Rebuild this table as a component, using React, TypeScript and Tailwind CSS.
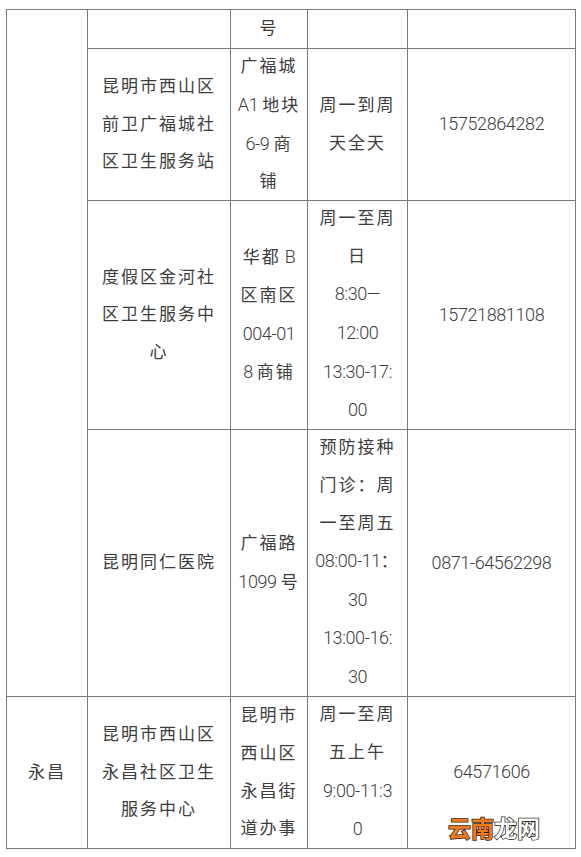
import React from "react";

type Cell = { lines: string[]; className?: string };

const CJK = /([\u3000-\u303f\u4e00-\u9fff\uff00-\uffef]+)/;

// split a line into CJK and latin runs so only the Chinese gets the wide spacing
const Line: React.FC<{ text: string }> = ({ text }) => {
  const parts = text.split(CJK).filter(Boolean);
  return (
    <div className="whitespace-nowrap">
      {parts.map((p, i) =>
        CJK.test(p) ? (
          <span key={i} className="tracking-[2px]">
            {p}
          </span>
        ) : (
          <span key={i} className="text-[18px] font-light tracking-[-0.4px]">
            {p}
          </span>
        )
      )}
    </div>
  );
};

const TableCell: React.FC<{ cell: Cell; children?: React.ReactNode }> = ({ cell, children }) => (
  <div
    className={
      "relative flex flex-col items-center justify-center border-r border-b border-[#7a7a7a] text-center " +
      (cell.className ?? "")
    }
  >
    {cell.lines.map((l, i) => (
      <Line key={i} text={l} />
    ))}
    {children}
  </div>
);

const rows: Cell[][] = [
  [{ lines: [] }, { lines: ["号"] }, { lines: [] }, { lines: [] }],
  [
    { lines: ["昆明市西山区", "前卫广福城社", "区卫生服务站"] },
    { lines: ["广福城", "A1 地块", "6-9 商", "铺"] },
    { lines: ["周一到周", "天全天"] },
    { lines: ["15752864282"] },
  ],
  [
    { lines: ["度假区金河社", "区卫生服务中", "心"] },
    { lines: ["华都 B", "区南区", "004-01", "8 商铺"] },
    { lines: ["周一至周", "日", "8:30—", "12:00", "13:30-17:", "00"] },
    { lines: ["15721881108"] },
  ],
  [
    { lines: ["昆明同仁医院"] },
    { lines: ["广福路", "1099 号"] },
    { lines: ["预防接种", "门诊：周", "一至周五", "08:00-11：", "30", "13:00-16:", "30"] },
    { lines: ["0871-64562298"] },
  ],
];

const lastRow: Cell[] = [
  { lines: ["永昌"] },
  { lines: ["昆明市西山区", "永昌社区卫生", "服务中心"] },
  { lines: ["昆明市", "西山区", "永昌街", "道办事"] },
  { lines: ["周一至周", "五上午", "9:00-11:3", "0"] },
];

const App: React.FC = () => {
  return (
    <div className="min-h-screen w-[581px] bg-white pt-[9px] pl-[6px] text-[17px] leading-[37.6px] text-[#3d3d3d] [font-family:Roboto,'Noto_Sans_CJK_SC',sans-serif]">
      <div className="grid w-[570px] grid-cols-[81px_143px_77px_100px_168px] grid-rows-[39px_152px_229px_267px_152px] border-t border-l border-[#7a7a7a]">
        {/* district column, merged over the first four rows */}
        <div className="row-span-4 border-r border-b border-[#7a7a7a]" />
        {rows.map((r, ri) => r.map((c, ci) => <TableCell key={ri + "-" + ci} cell={c} />))}

        {lastRow.map((c, ci) => (
          <TableCell key={"last-" + ci} cell={c} />
        ))}
        <TableCell cell={{ lines: ["64571606"] }}>
          {/* site watermark */}
          <div className="absolute left-[40px] top-[117px] whitespace-nowrap text-[23px] leading-[26px] font-bold [font-family:'Noto_Sans_CJK_SC',sans-serif] [-webkit-text-stroke:1.5px_#2a1f18] [paint-order:stroke_fill]">
            <span className="text-[#f07b1f]">云南</span>
            <span className="text-white">龙网</span>
          </div>
        </TableCell>
      </div>
    </div>
  );
};

export default App;
